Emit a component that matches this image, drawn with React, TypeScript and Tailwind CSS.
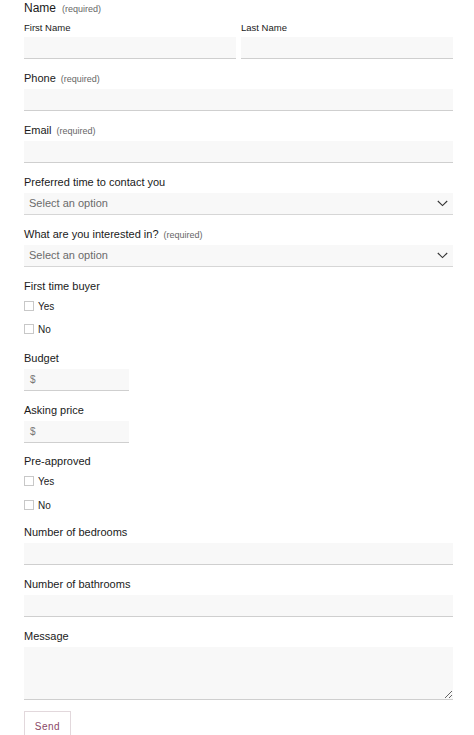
import React from "react";

const font = { fontFamily: '"Liberation Sans", Arial, sans-serif' };

function Label({ text, required }: { text: string; required?: boolean }) {
  return (
    <div className="h-[14px] leading-[14px] text-[11px] text-[#1a1a1a] mb-[4px] whitespace-nowrap">
      {text}
      {required && <span className="ml-[5px] text-[9px] text-[#666]">(required)</span>}
    </div>
  );
}

function Input({ className = "", children }: { className?: string; children?: React.ReactNode }) {
  return (
    <div
      className={
        "h-[22px] bg-[#f8f8f8] border-b border-[#cfcfcf] flex items-center px-[6px] text-[10px] text-[#777] " +
        className
      }
    >
      {children}
    </div>
  );
}

function Select() {
  return (
    <div className="h-[22px] bg-[#f8f8f8] border-b border-[#d6d6d6] flex items-center justify-between pl-[5px] pr-[5px] text-[11px] text-[#6b6b6b]">
      <span>Select an option</span>
      <svg width="11" height="7" viewBox="0 0 11 7" fill="none">
        <path d="M0.8 1 L5.5 5.6 L10.2 1" stroke="#333" strokeWidth="1.1" />
      </svg>
    </div>
  );
}

function Box() {
  return <div className="w-[10px] h-[10px] border border-[#c8c8c8] bg-white mr-[4px]" />;
}

export default function App() {
  return (
    <div className="w-[474px] h-[735px] bg-white overflow-hidden px-[24px] pr-[21px]" style={font}>
      {/* Name */}
      <div className="mb-[12px]">
        <div className="h-[16px] leading-[16px] text-[12px] text-[#1a1a1a] whitespace-nowrap">
          Name<span className="ml-[6px] text-[9px] text-[#666]">(required)</span>
        </div>
        <div className="grid grid-cols-2 gap-[5px] mt-[5px]">
          <div>
            <div className="h-[14px] leading-[14px] text-[9.5px] text-[#1a1a1a] mb-[2px]">First Name</div>
            <Input />
          </div>
          <div>
            <div className="h-[14px] leading-[14px] text-[9.5px] text-[#1a1a1a] mb-[2px]">Last Name</div>
            <Input />
          </div>
        </div>
      </div>

      <div className="mb-[12px]">
        <Label text="Phone" required />
        <Input />
      </div>

      <div className="mb-[12px]">
        <Label text="Email" required />
        <Input />
      </div>

      <div className="mb-[12px]">
        <Label text="Preferred time to contact you" />
        <Select />
      </div>

      <div className="mb-[12px]">
        <Label text="What are you interested in?" required />
        <Select />
      </div>

      <div className="mb-[12px]">
        <div className="h-[14px] leading-[14px] text-[11px] text-[#1a1a1a] mb-[3px]">First time buyer</div>
        <div className="h-[20px] flex items-center mb-[3px]">
          <Box />
          <span className="text-[10px] text-[#222]">Yes</span>
        </div>
        <div className="h-[20px] flex items-center">
          <Box />
          <span className="text-[10px] text-[#222]">No</span>
        </div>
      </div>

      <div className="mb-[12px]">
        <Label text="Budget" />
        <Input className="w-[105px]">$</Input>
      </div>

      <div className="mb-[11px]">
        <Label text="Asking price" />
        <Input className="w-[105px]">$</Input>
      </div>

      <div className="mb-[10px]">
        <div className="h-[14px] leading-[14px] text-[11px] text-[#1a1a1a] mb-[3px]">Pre-approved</div>
        <div className="h-[20px] flex items-center mb-[4px]">
          <Box />
          <span className="text-[10px] text-[#222]">Yes</span>
        </div>
        <div className="h-[20px] flex items-center">
          <Box />
          <span className="text-[10px] text-[#222]">No</span>
        </div>
      </div>

      <div className="mb-[12px]">
        <Label text="Number of bedrooms" />
        <Input />
      </div>

      <div className="mb-[12px]">
        <Label text="Number of bathrooms" />
        <Input />
      </div>

      <div className="mb-[11px]">
        <Label text="Message" />
        <textarea className="block w-full h-[53px] bg-[#f8f8f8] border-0 border-b border-[#cfcfcf] resize-y outline-none" />
      </div>

      <button className="w-[47px] h-[30px] border border-[#e2d8dc] bg-white text-[10px] text-[#8a4866] tracking-[0.5px]">
        Send
      </button>
    </div>
  );
}
